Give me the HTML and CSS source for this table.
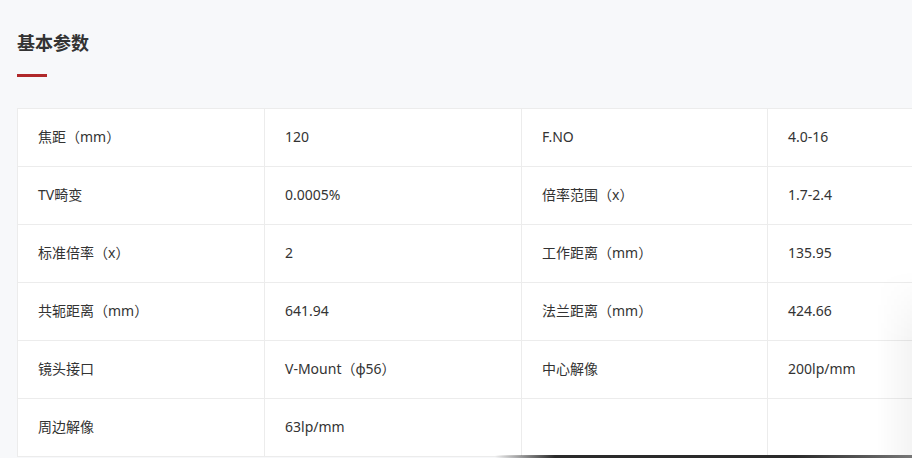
FILE: index.html
```html
<!DOCTYPE html>
<html lang="zh-CN">
<head>
<meta charset="utf-8">
<title>基本参数</title>
<link rel="stylesheet" href="styles.css">
</head>
<body>
<section class="params">
  <h2 class="params-title">基本参数</h2>
  <div class="params-bar"></div>
  <div class="params-grid">
    <div class="cell">焦距（mm）</div><div class="cell">120</div><div class="cell">F.NO</div><div class="cell">4.0-16</div>
    <div class="cell">TV畸变</div><div class="cell">0.0005%</div><div class="cell">倍率范围（x）</div><div class="cell">1.7-2.4</div>
    <div class="cell">标准倍率（x）</div><div class="cell">2</div><div class="cell">工作距离（mm）</div><div class="cell">135.95</div>
    <div class="cell">共轭距离（mm）</div><div class="cell">641.94</div><div class="cell">法兰距离（mm）</div><div class="cell">424.66</div>
    <div class="cell">镜头接口</div><div class="cell">V-Mount（φ56）</div><div class="cell">中心解像</div><div class="cell">200lp/mm</div>
    <div class="cell">周边解像</div><div class="cell">63lp/mm</div><div class="cell"></div><div class="cell"></div>
  </div>
</section>
<div class="shade-right"></div>
<div class="shade-bottom"></div>
</body>
</html>
```

FILE: styles.css
```css
html, body {
  margin: 0;
  padding: 0;
  width: 912px;
  height: 458px;
  overflow: hidden;
  background: #f7f8fa;
  font-family: "Noto Sans", "Noto Sans CJK SC", sans-serif;
  color: #333;
}
body { position: relative; }
.params {
  padding-left: 17px;
}
.params-title {
  margin: 0;
  padding-top: 31px;
  font-size: 18px;
  line-height: 24px;
  font-weight: 700;
  color: #333;
}
.params-bar {
  margin-top: 19px;
  width: 30px;
  height: 3px;
  background: #b0282a;
}
.params-grid {
  margin-top: 31px;
  display: grid;
  grid-template-columns: 247px 257px 246px 1fr;
  border-top: 1px solid #ececec;
  border-left: 1px solid #ececec;
  background: #fff;
}
.cell {
  box-sizing: border-box;
  height: 58px;
  padding: 0 20px 3px;
  border-right: 1px solid #ececec;
  border-bottom: 1px solid #ececec;
  display: flex;
  align-items: center;
  font-size: 14px;
  color: #333;
  white-space: nowrap;
}
.cell:nth-child(4n) {
  border-right: 0;
}
.shade-right {
  position: absolute;
  right: 0;
  top: 270px;
  width: 36px;
  height: 188px;
  background: linear-gradient(to right, rgba(0,0,0,0), rgba(0,0,0,0.045));
  -webkit-mask-image: linear-gradient(to bottom, transparent, #000 70px);
  mask-image: linear-gradient(to bottom, transparent, #000 70px);
}
.shade-bottom {
  position: absolute;
  left: 495px;
  right: 0;
  bottom: 0;
  height: 3px;
  background: linear-gradient(to right, rgba(40,40,40,0), #2a2a2a 60px, #2a2a2a 300px, #777 100%);
}
```
